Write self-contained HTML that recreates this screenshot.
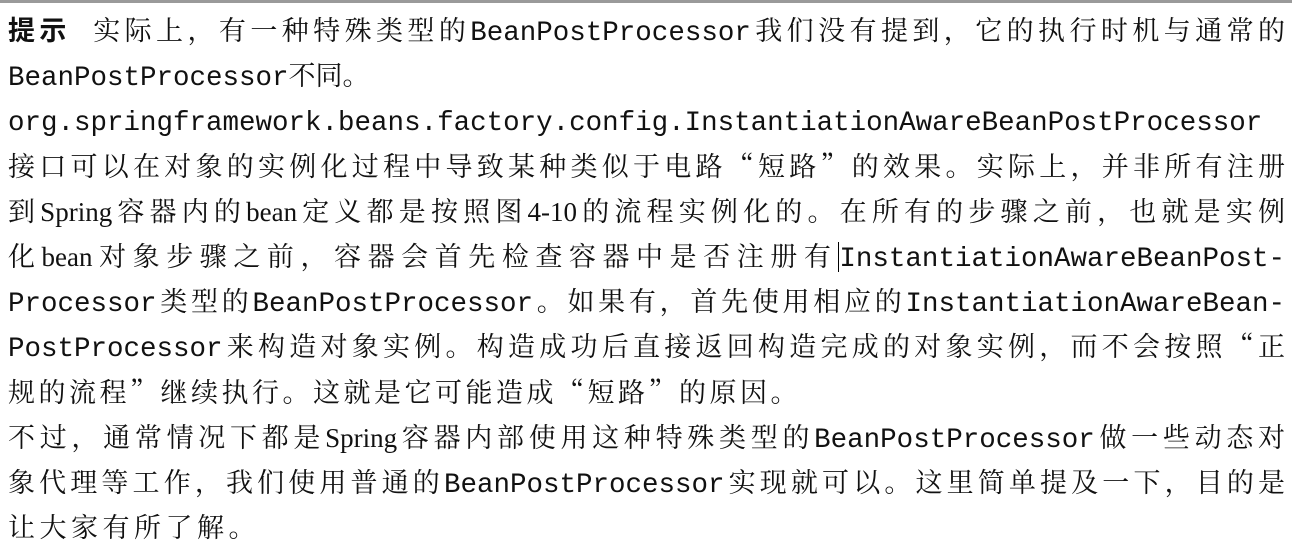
<!DOCTYPE html>
<html><head><meta charset="utf-8"><style>
html,body{margin:0;padding:0;background:#fff;width:1292px;height:550px;overflow:hidden}
.top{height:3px;background:#9a9a9a}
.wrap{position:absolute;left:8px;top:9px;width:1277px;color:#111;font-family:"Liberation Serif","Noto Serif CJK SC",serif;font-size:27px}
.l{height:45.2px;line-height:45.2px;white-space:nowrap;text-align:justify;text-align-last:justify;overflow:visible}
.n{text-align-last:left}
.m{font-family:"Liberation Mono","Noto Serif CJK SC",monospace;font-size:27.5px;line-height:0}
.q{font-family:"Noto Serif CJK SC",serif;line-height:0}
b{font-family:"Liberation Sans","Noto Sans CJK SC",sans-serif;font-weight:bold;line-height:0}
.cur{border-left:1.5px solid #000;margin-left:1px}
</style></head><body>
<div class="top"></div>
<div class="wrap">
<div class="l"><b>提示</b>&nbsp;&nbsp;实际上，有一种特殊类型的<span class="m">BeanPostProcessor</span>我们没有提到，它的执行时机与通常的</div>
<div class="l n"><span class="m">BeanPostProcessor</span>不同。</div>
<div class="l"><span class="m">org.springframework.beans.factory.config.InstantiationAwareBeanPostProcessor</span></div>
<div class="l">接口可以在对象的实例化过程中导致某种类似于电路<span class="q">“</span>短路<span class="q">”</span>的效果。实际上，并非所有注册</div>
<div class="l">到Spring容器内的bean定义都是按照图4-10的流程实例化的。在所有的步骤之前，也就是实例</div>
<div class="l">化bean对象步骤之前，容器会首先检查容器中是否注册有<span class="cur"></span><span class="m">InstantiationAwareBeanPost-</span></div>
<div class="l"><span class="m">Processor</span>类型的<span class="m">BeanPostProcessor</span>。如果有，首先使用相应的<span class="m">InstantiationAwareBean-</span></div>
<div class="l"><span class="m">PostProcessor</span>来构造对象实例。构造成功后直接返回构造完成的对象实例，而不会按照<span class="q">“</span>正</div>
<div class="l n" style="letter-spacing:3.5px">规的流程<span class="q">”</span>继续执行。这就是它可能造成<span class="q">“</span>短路<span class="q">”</span>的原因。</div>
<div class="l">不过，通常情况下都是Spring容器内部使用这种特殊类型的<span class="m">BeanPostProcessor</span>做一些动态对</div>
<div class="l">象代理等工作，我们使用普通的<span class="m">BeanPostProcessor</span>实现就可以。这里简单提及一下，目的是</div>
<div class="l n" style="letter-spacing:4.5px">让大家有所了解。</div>
</div>
</body></html>
